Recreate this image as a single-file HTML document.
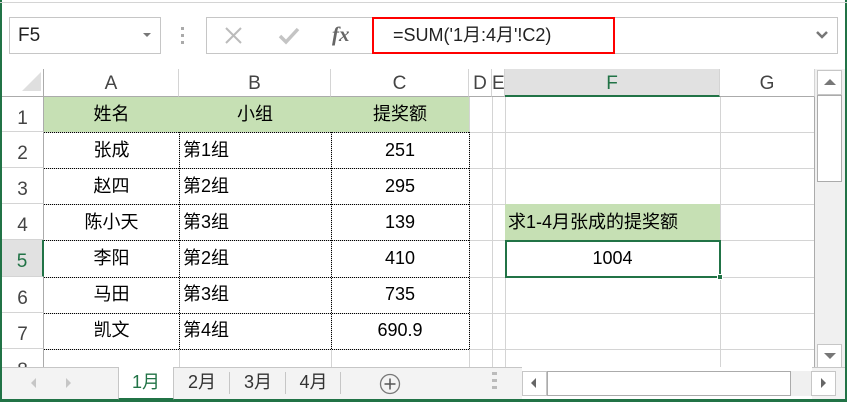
<!DOCTYPE html>
<html><head><meta charset="utf-8"><style>
*{margin:0;padding:0;box-sizing:border-box}
body{width:847px;height:402px;overflow:hidden;background:#fff;position:relative;font-family:"Liberation Sans","Noto Sans CJK SC",sans-serif;color:#000}
.a{position:absolute}
.hdr{position:absolute;top:69px;height:28px;font-size:19px;color:#444;text-align:center;line-height:30px;border-right:1px solid #d4d4d4;border-bottom:1px solid #ababab;background:#fff}
.rh{position:absolute;left:2px;width:42px;font-size:19px;color:#444;text-align:center;border-bottom:1px solid #d4d4d4;border-right:1px solid #ababab;padding-top:11px}
.c{position:absolute;font-size:18px;line-height:35px;white-space:nowrap}
.hl{position:absolute;height:1px;background:#d4d4d4}
.vl{position:absolute;width:1px;background:#d4d4d4}
.dh{position:absolute;height:0;border-top:1px dotted #000}
.dv{position:absolute;width:0;border-left:1px dotted #000}
</style></head><body>
<div class="a" style="left:0;top:0;width:847px;height:69px;background:#fff"></div>
<div class="a" style="left:0;top:0;width:2px;height:402px;background:#217346"></div>
<div class="a" style="left:845px;top:0;width:2px;height:402px;background:#217346"></div>
<div class="a" style="left:0;top:2px;width:847px;height:1px;background:#d4d4d4"></div>
<!-- name box -->
<div class="a" style="left:9px;top:17px;width:152px;height:37px;border:1px solid #c6c6c6;font-size:19px;line-height:35px;padding-left:8px;color:#222">F5</div>
<div class="a" style="left:143px;top:33px;border-left:4px solid transparent;border-right:4px solid transparent;border-top:4px solid #777"></div>
<div class="a" style="left:181px;top:27px;width:3px;height:3px;background:#aaa;box-shadow:0 7px 0 #aaa,0 14px 0 #aaa"></div>
<div class="a" style="left:206px;top:17px;width:167px;height:37px;border:1px solid #c6c6c6;border-right:none"></div>
<svg class="a" style="left:224px;top:26px" width="20" height="20"><path d="M2 2l15 15M17 2L2 17" stroke="#bbb" stroke-width="2"/></svg>
<svg class="a" style="left:278px;top:26px" width="22" height="20"><path d="M2 10l6 6L20 3" stroke="#c4c4c4" stroke-width="3.5" fill="none"/></svg>
<div class="a" style="left:332px;top:22px;font-size:21px;color:#666;font-family:'Liberation Serif',serif;font-style:italic;font-weight:bold">fx</div>
<div class="a" style="left:372px;top:17px;width:466px;height:37px;border:1px solid #c6c6c6"></div>
<div class="a" style="left:372px;top:17px;width:243px;height:37px;border:2px solid #f00;font-size:18px;line-height:33px;padding-left:19px;color:#222">=SUM('1月:4月'!C2)</div>
<svg class="a" style="left:815px;top:30px" width="14" height="10"><path d="M2 2l5 5 5-5" stroke="#777" stroke-width="2.5" fill="none"/></svg>
<!-- headers -->
<div class="a" style="left:2px;top:69px;width:42px;height:28px;border-right:1px solid #ababab;border-bottom:1px solid #ababab"></div>
<div class="a" style="left:22px;top:72px;width:0;height:0;border-left:19px solid transparent;border-bottom:19px solid #dfdfdf"></div>
<div class="hdr" style="left:44px;width:135px">A</div>
<div class="hdr" style="left:179px;width:152px">B</div>
<div class="hdr" style="left:331px;width:138px">C</div>
<div class="hdr" style="left:469px;width:23px">D</div>
<div class="hdr" style="left:492px;width:13px;text-align:left">E</div>
<div class="hdr" style="left:505px;width:215px;background:#e1e1e1;color:#217346;border-bottom:2px solid #217346">F</div>
<div class="hdr" style="left:720px;width:95px">G</div>
<!-- row headers -->
<div class="rh" style="top:97px;height:35px">1</div>
<div class="rh" style="top:132px;height:36px">2</div>
<div class="rh" style="top:168px;height:36px">3</div>
<div class="rh" style="top:204px;height:36px">4</div>
<div class="rh" style="top:240px;height:37px;background:#e1e1e1;color:#217346;border-right:2px solid #217346">5</div>
<div class="rh" style="top:277px;height:36px">6</div>
<div class="rh" style="top:313px;height:36px">7</div>
<div class="rh" style="top:349px;height:20px;overflow:hidden">8</div>
<!-- gridlines -->
<div class="hl" style="left:44px;top:132px;width:771px"></div>
<div class="hl" style="left:44px;top:168px;width:771px"></div>
<div class="hl" style="left:44px;top:204px;width:771px"></div>
<div class="hl" style="left:44px;top:240px;width:771px"></div>
<div class="hl" style="left:44px;top:277px;width:771px"></div>
<div class="hl" style="left:44px;top:313px;width:771px"></div>
<div class="hl" style="left:44px;top:349px;width:771px"></div>
<div class="vl" style="left:179px;top:97px;height:272px"></div>
<div class="vl" style="left:331px;top:97px;height:272px"></div>
<div class="vl" style="left:469px;top:97px;height:272px"></div>
<div class="vl" style="left:492px;top:97px;height:272px"></div>
<div class="vl" style="left:505px;top:97px;height:272px"></div>
<div class="vl" style="left:720px;top:97px;height:272px"></div>
<div class="a" style="left:814px;top:97px;width:1px;height:272px;background:#ababab"></div>
<!-- green header row -->
<div class="a" style="left:44px;top:97px;width:425px;height:35px;background:#c6e0b4"></div>
<div class="a" style="left:505px;top:204px;width:215px;height:36px;background:#c6e0b4"></div>
<!-- dotted borders -->
<div class="dh" style="left:44px;top:132px;width:425px"></div>
<div class="dh" style="left:44px;top:168px;width:425px"></div>
<div class="dh" style="left:44px;top:204px;width:425px"></div>
<div class="dh" style="left:44px;top:240px;width:425px"></div>
<div class="dh" style="left:44px;top:277px;width:425px"></div>
<div class="dh" style="left:44px;top:313px;width:425px"></div>
<div class="dh" style="left:44px;top:349px;width:425px"></div>
<div class="dv" style="left:179px;top:132px;height:217px"></div>
<div class="dv" style="left:331px;top:132px;height:217px"></div>
<div class="dv" style="left:469px;top:132px;height:217px"></div>
<!-- text -->
<div class="c" style="left:44px;top:97px;width:135px;text-align:center">姓名</div>
<div class="c" style="left:179px;top:97px;width:152px;text-align:center">小组</div>
<div class="c" style="left:331px;top:97px;width:138px;text-align:center">提奖额</div>
<div class="c" style="left:44px;top:133px;width:135px;text-align:center">张成</div>
<div class="c" style="left:183px;top:133px">第1组</div>
<div class="c" style="left:331px;top:133px;width:138px;text-align:center">251</div>
<div class="c" style="left:44px;top:169px;width:135px;text-align:center">赵四</div>
<div class="c" style="left:183px;top:169px">第2组</div>
<div class="c" style="left:331px;top:169px;width:138px;text-align:center">295</div>
<div class="c" style="left:44px;top:205px;width:135px;text-align:center">陈小天</div>
<div class="c" style="left:183px;top:205px">第3组</div>
<div class="c" style="left:331px;top:205px;width:138px;text-align:center">139</div>
<div class="c" style="left:44px;top:241px;width:135px;text-align:center">李阳</div>
<div class="c" style="left:183px;top:241px">第2组</div>
<div class="c" style="left:331px;top:241px;width:138px;text-align:center">410</div>
<div class="c" style="left:44px;top:277px;width:135px;text-align:center">马田</div>
<div class="c" style="left:183px;top:277px">第3组</div>
<div class="c" style="left:331px;top:277px;width:138px;text-align:center">735</div>
<div class="c" style="left:44px;top:313px;width:135px;text-align:center">凯文</div>
<div class="c" style="left:183px;top:313px">第4组</div>
<div class="c" style="left:331px;top:313px;width:138px;text-align:center">690.9</div>
<div class="c" style="left:508px;top:205px">求1-4月张成的提奖额</div>
<div class="a" style="left:505px;top:240px;width:216px;height:38px;border:2px solid #217346"></div>
<div class="a" style="left:717px;top:274px;width:6px;height:6px;background:#217346;border:1px solid #fff"></div>
<div class="c" style="left:505px;top:241px;width:215px;text-align:center">1004</div>
<!-- vertical scroll -->
<div class="a" style="left:815px;top:69px;width:30px;height:300px;background:#f0f0f0"></div>
<div class="a" style="left:817px;top:70px;width:25px;height:25px;background:#fff;border:1px solid #c6c6c6"></div>
<div class="a" style="left:824px;top:79px;border-left:6px solid transparent;border-right:6px solid transparent;border-bottom:6px solid #777"></div>
<div class="a" style="left:817px;top:95px;width:25px;height:87px;background:#fff;border:1px solid #ababab"></div>
<div class="a" style="left:817px;top:344px;width:25px;height:25px;background:#fff;border:1px solid #c6c6c6"></div>
<div class="a" style="left:824px;top:353px;border-left:6px solid transparent;border-right:6px solid transparent;border-top:6px solid #777"></div>
<!-- tab bar -->
<div class="a" style="left:2px;top:367px;width:843px;height:33px;background:#f3f3f3;border-top:1px solid #c6c6c6"></div>
<div class="a" style="left:2px;top:399px;width:843px;height:3px;background:#217346"></div>
<div class="a" style="left:31px;top:378px;border-top:5px solid transparent;border-bottom:5px solid transparent;border-right:5px solid #c6c6c6"></div>
<div class="a" style="left:66px;top:378px;border-top:5px solid transparent;border-bottom:5px solid transparent;border-left:5px solid #c6c6c6"></div>
<div class="a" style="left:118px;top:367px;width:56px;height:33px;background:#fff;border-left:1px solid #c6c6c6;border-right:1px solid #c6c6c6;border-bottom:2px solid #217346;font-size:18px;color:#217346;text-align:center;line-height:30px">1月</div>
<div class="a" style="left:174px;top:367px;width:56px;height:32px;font-size:18px;color:#333;text-align:center;line-height:30px">2月</div>
<div class="a" style="left:229px;top:372px;width:1px;height:22px;background:#c6c6c6"></div>
<div class="a" style="left:230px;top:367px;width:56px;height:32px;font-size:18px;color:#333;text-align:center;line-height:30px">3月</div>
<div class="a" style="left:285px;top:372px;width:1px;height:22px;background:#c6c6c6"></div>
<div class="a" style="left:286px;top:367px;width:55px;height:32px;font-size:18px;color:#333;text-align:center;line-height:30px">4月</div>
<div class="a" style="left:340px;top:372px;width:1px;height:22px;background:#c6c6c6"></div>
<svg class="a" style="left:379px;top:373px" width="22" height="22"><circle cx="11" cy="11" r="9.5" stroke="#777" stroke-width="1.3" fill="none"/><path d="M11 5.5v11M5.5 11h11" stroke="#555" stroke-width="1.5"/></svg>
<div class="a" style="left:492px;top:372px;width:5px;height:3px;background:#bbb;box-shadow:0 7px 0 #bbb,0 14px 0 #bbb"></div>
<div class="a" style="left:522px;top:367px;width:290px;height:32px;background:#fff"></div>
<div class="a" style="left:522px;top:371px;width:25px;height:25px;background:#fff;border:1px solid #c6c6c6"></div>
<div class="a" style="left:531px;top:378px;border-top:5px solid transparent;border-bottom:5px solid transparent;border-right:5px solid #666"></div>
<div class="a" style="left:547px;top:371px;width:244px;height:25px;background:#fff;border:1px solid #ababab"></div>
<div class="a" style="left:791px;top:371px;width:20px;height:25px;background:#f0f0f0"></div>
<div class="a" style="left:811px;top:371px;width:25px;height:25px;background:#fff;border:1px solid #c6c6c6"></div>
<div class="a" style="left:821px;top:378px;border-top:5px solid transparent;border-bottom:5px solid transparent;border-left:5px solid #666"></div>
</body></html>
